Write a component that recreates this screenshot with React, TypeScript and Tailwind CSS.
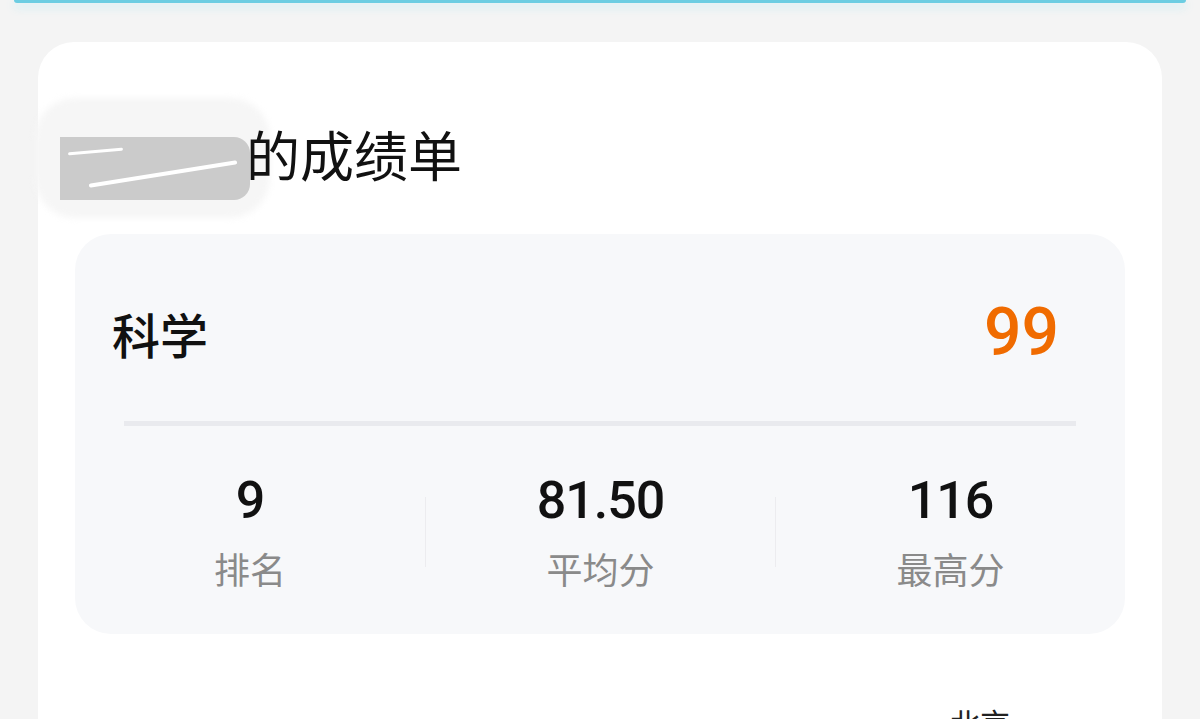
const stats = [
  { value: "9", label: "排名" },
  { value: "81.50", label: "平均分" },
  { value: "116", label: "最高分" },
];

export default function App() {
  return (
    <div
      className="w-[1200px] h-[719px] overflow-hidden bg-[#f4f4f4]"
      style={{ fontFamily: '"Noto Sans CJK SC", "Noto Sans", sans-serif' }}
    >
      {/* top bar edge */}
      <div className="mx-[14px] h-[3px] rounded-b-full bg-[#6ccde2] shadow-[0_4px_8px_rgba(180,235,245,0.8)]" />

      {/* report card */}
      <div className="mx-[38px] mt-[39px] h-[720px] rounded-t-[36px] bg-white px-[37px] pt-[80px]">
        {/* title, name is blurred out */}
        <div className="flex items-start">
          <div className="relative -ml-[15px] mr-[-4px] h-[64px] w-[190px]">
            <div className="absolute -left-[25px] -top-[24px] h-[120px] w-[235px] rounded-[40px] bg-[#f6f6f6] blur-[3px]" />
            <div className="absolute left-0 top-[15px] h-[63px] w-[190px] rounded-r-[16px] bg-[#cbcbcb]" />
            <div className="absolute left-[28px] top-[50px] h-[4px] w-[150px] -rotate-[9deg] rounded-full bg-white" />
            <div className="absolute left-[8px] top-[28px] h-[3px] w-[55px] -rotate-[5deg] rounded-full bg-white" />
          </div>
          <h1 className="relative text-[54px] leading-[64px] font-normal text-[#111]">的成绩单</h1>
        </div>

        {/* subject panel */}
        <div className="mt-[48px] rounded-[36px] bg-[#f7f8fa] pt-[64px] pb-[44px]">
          <div className="flex items-center justify-between pl-[37px] pr-[66px]">
            <span className="text-[48px] leading-[70px] font-medium text-[#111]">科学</span>
            <span
              className="text-[66px] leading-[70px] font-medium text-[#f06b00]"
              style={{ fontFamily: 'Roboto, "Noto Sans", sans-serif' }}
            >
              99
            </span>
          </div>

          <div className="mx-[49px] mt-[53px] h-[5px] bg-[#e9eaee]" />

          <div className="mt-[47px] flex items-center">
            {stats.map((s, i) => (
              <div key={s.label} className="flex flex-1 items-center">
                {i > 0 && <div className="h-[70px] w-px bg-[#ececef]" />}
                <div className="flex flex-1 flex-col items-center">
                  <span
                    className="text-[52px] leading-[56px] font-medium tracking-[-1px] text-[#111]"
                    style={{ fontFamily: 'Roboto, "Noto Sans", sans-serif' }}
                  >
                    {s.value}
                  </span>
                  <span className="mt-[17px] text-[36px] leading-[44px] text-[#8a8a8a]">{s.label}</span>
                </div>
              </div>
            ))}
          </div>
        </div>

        {/* footer text, cut off by the window edge as in the screenshot */}
        <div className="mt-[68px] flex justify-end pr-[115px]">
          <span className="text-[30px] leading-[40px] text-[#222]">北京</span>
        </div>
      </div>
    </div>
  );
}
